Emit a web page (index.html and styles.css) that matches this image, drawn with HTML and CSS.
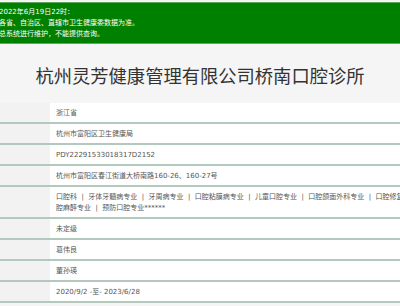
FILE: index.html
```html
<!DOCTYPE html>
<html lang="zh-CN">
<head>
<meta charset="utf-8">
<title>杭州灵芳健康管理有限公司桥南口腔诊所</title>
<link rel="stylesheet" href="styles.css">
</head>
<body>
<div class="notice">
  <div class="notice-text">
    <p class="l1">2022年6月19日22时：</p>
    <p class="l2">各省、自治区、直辖市卫生健康委数据为准。</p>
    <p class="l3">总系统进行维护，不能提供查询。</p>
  </div>
</div>
<h1 class="title">杭州灵芳健康管理有限公司桥南口腔诊所</h1>
<div class="info">
  <div class="row"><div class="label"></div><div class="value">浙江省</div></div>
  <div class="row"><div class="label"></div><div class="value">杭州市富阳区卫生健康局</div></div>
  <div class="row"><div class="label"></div><div class="value">PDY22291533018317D2152</div></div>
  <div class="row"><div class="label"></div><div class="value">杭州市富阳区春江街道大桥南路160-26、160-27号</div></div>
  <div class="row"><div class="label"></div><div class="value"><span class="line">口腔科 &nbsp;|&nbsp; 牙体牙髓病专业 &nbsp;|&nbsp; 牙周病专业 &nbsp;|&nbsp; 口腔粘膜病专业 &nbsp;|&nbsp; 儿童口腔专业 &nbsp;|&nbsp; 口腔颌面外科专业 &nbsp;|&nbsp; 口腔修复专业 &nbsp;|&nbsp; 口腔正畸专业 &nbsp;|&nbsp; 口</span><span class="line">腔麻醉专业 &nbsp;|&nbsp; 预防口腔专业******</span></div></div>
  <div class="row"><div class="label"></div><div class="value">未定级</div></div>
  <div class="row"><div class="label"></div><div class="value">葛伟良</div></div>
  <div class="row"><div class="label"></div><div class="value">董孙瑛</div></div>
  <div class="row"><div class="label"></div><div class="value">2020/9/2 -至- 2023/6/28</div></div>
</div>
</body>
</html>
```
FILE: styles.css
```css
html, body {
  margin: 0;
  padding: 0;
  overflow: hidden;
}
body {
  background: #f5f5f5;
  font-family: "DejaVu Sans", "Noto Sans CJK SC", sans-serif;
  padding-top: 2px;
}
.notice {
  background: #008000;
  border-top: 1px solid #5aa85a;
  border-bottom: 1px solid #5aa85a;
  padding: 4px 0 3px;
  overflow: hidden;
}
.notice-text {
  margin-left: -1px;
  color: #fff;
  font-size: 7px;
  line-height: 11px;
}
.notice-text p {
  margin: 0;
  white-space: nowrap;
}
.title {
  margin: 18px 0 14px;
  text-align: center;
  font-family: "Noto Sans CJK SC", sans-serif;
  font-weight: normal;
  font-size: 18.3px;
  line-height: 27px;
  color: #333;
}
.info {
  font-size: 7px;
  line-height: 11px;
  color: #555;
}
.row {
  display: grid;
  grid-template-columns: 50px 1fr;
  border-bottom: 2px solid #b4c9be;
}
.label {
  background: #f2f2f2;
}
.value {
  background: #fff;
  padding: 5px 0 3px 6px;
  white-space: nowrap;
  min-width: 0;
}
.value .line {
  display: block;
}
```
